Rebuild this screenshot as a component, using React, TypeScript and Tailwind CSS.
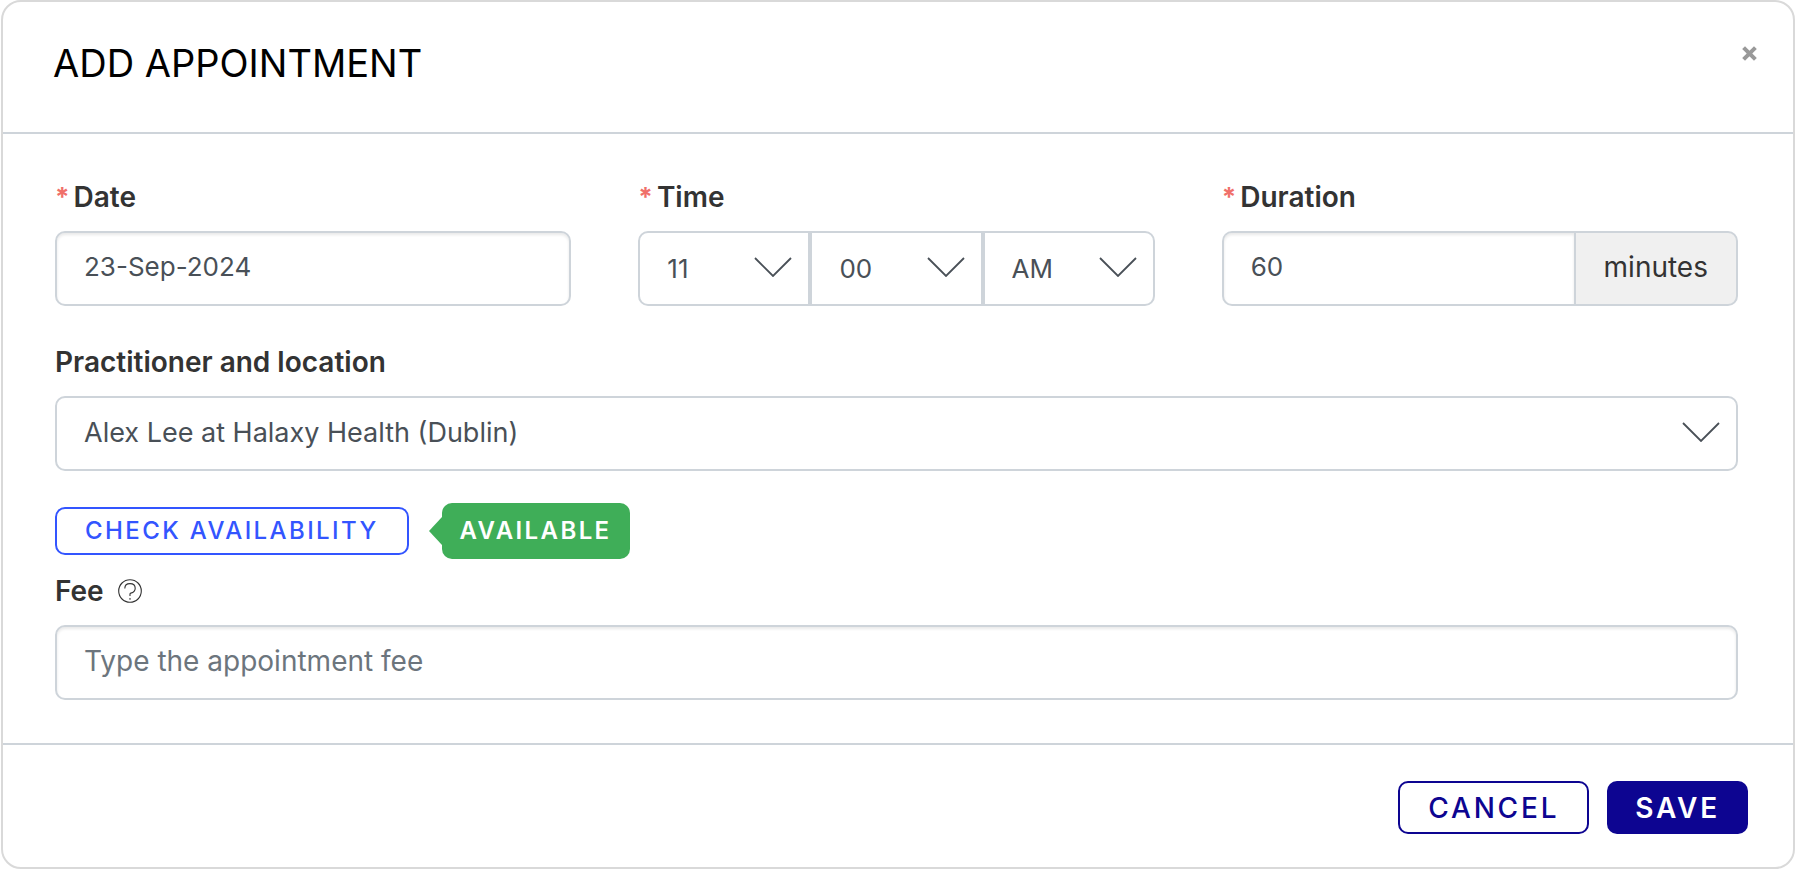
// src/components/appointments/AddAppointmentDialog.tsx
// Appointment form: date, time, duration, practitioner and fee.

import { useState } from 'react';
import type { ReactNode, SelectHTMLAttributes } from 'react';
import clsx from 'clsx';

const inputCls =
  'h-[75px] w-full min-w-0 border-2 border-[#ced4da] bg-white px-[27px] pb-1 text-[#495057] ' +
  'shadow-[inset_0_2px_3px_rgba(0,0,0,0.09)] outline-none placeholder:text-[#6c757d] placeholder:opacity-100';

function FieldLabel({ htmlFor, required, children }: { htmlFor: string; required?: boolean; children: ReactNode }) {
  return (
    <label htmlFor={htmlFor} className="flex gap-1 text-[28px] leading-10 font-semibold text-[#333333]">
      {required && <span className="text-[26px] font-bold text-[#f0706a]">*</span>}
      {children}
    </label>
  );
}

function Chevron() {
  return (
    <svg
      className="pointer-events-none absolute top-1/2 right-[18px] -mt-3 h-5 w-[38px]"
      viewBox="0 0 38 20"
      fill="none"
      stroke="#495057"
      strokeWidth="1.8"
      aria-hidden="true"
    >
      <path d="M1 1 19 19 37 1" />
    </svg>
  );
}

interface SelectProps extends SelectHTMLAttributes<HTMLSelectElement> {
  options: string[];
}

function Select({ options, className, ...rest }: SelectProps) {
  return (
    <div className="relative">
      <select
        {...rest}
        className={clsx(
          'h-[75px] w-full appearance-none border-2 border-[#ced4da] bg-white pr-16 pl-[27px] text-[#495057] outline-none',
          className
        )}
      >
        {options.map(o => <option key={o}>{o}</option>)}
      </select>
      <Chevron />
    </div>
  );
}

function HelpIcon() {
  return (
    <svg className="h-6 w-6" viewBox="0 0 24 24" fill="none" stroke="#333333" strokeWidth="1.1" aria-hidden="true">
      <circle cx="12" cy="12" r="11.3" />
      <path d="M6.8 9.4C6.8 6.4 9 4.6 12 4.6s5.2 1.9 5.2 4.7c0 2.9-2.2 4.4-4.4 4.8-.6.1-.8.4-.8.9v2" />
      <path d="M12 19v1.7" />
    </svg>
  );
}

export default function App() {
  const [date, setDate] = useState('23-Sep-2024');
  const [duration, setDuration] = useState('60');
  const [fee, setFee] = useState('');

  return (
    <main
      role="dialog"
      aria-labelledby="dialog-title"
      className="ml-px rounded-[20px] border-2 border-[#d9d9d9] bg-white font-['Inter',sans-serif]"
    >
      {/* Header */}
      <header className="flex items-start justify-between border-b-2 border-[#ced4da] pt-[37px] pr-9 pb-[45px] pl-[50px]">
        <h1 id="dialog-title" className="text-[38px] leading-12 font-normal text-black uppercase">Add appointment</h1>
        <button type="button" aria-label="Close" className="mt-[7px]">
          <svg className="h-[15px] w-[15px]" viewBox="0 0 15 15" stroke="#999999" strokeWidth="4" aria-hidden="true">
            <path d="M1.6 1.6 13.4 13.4M13.4 1.6 1.6 13.4" />
          </svg>
        </button>
      </header>

      <form onSubmit={e => e.preventDefault()}>
        {/* Fields */}
        <div className="pt-[43px] pr-[55px] pb-[43px] pl-[52px]">
          <div className="grid grid-cols-3 gap-x-[67px]">
            <div className="space-y-3.5">
              <FieldLabel htmlFor="date" required>Date</FieldLabel>
              <input
                id="date"
                value={date}
                onChange={e => setDate(e.target.value)}
                className={clsx(inputCls, 'rounded-[10px] text-[26px]')}
              />
            </div>

            <div className="space-y-3.5">
              <FieldLabel htmlFor="hour" required>Time</FieldLabel>
              <div className="grid grid-cols-3">
                <Select id="hour" options={['11', '12', '01', '02']} className="rounded-l-[10px] text-[26px]" />
                <Select aria-label="Minutes" options={['00', '15', '30', '45']} className="text-[26px]" />
                <Select aria-label="AM or PM" options={['AM', 'PM']} className="rounded-r-[10px] text-[26px]" />
              </div>
            </div>

            <div className="space-y-3.5">
              <FieldLabel htmlFor="duration" required>Duration</FieldLabel>
              <div className="flex">
                <input
                  id="duration"
                  value={duration}
                  onChange={e => setDuration(e.target.value)}
                  className={clsx(inputCls, 'rounded-l-[10px] border-r-0 text-[26px]')}
                />
                <span className="flex items-center rounded-r-[10px] border-2 border-[#ced4da] bg-[#f0f0f0] px-7 pb-1 text-[28px] text-[#333333]">
                  minutes
                </span>
              </div>
            </div>
          </div>

          <div className="mt-9 space-y-3.5">
            <FieldLabel htmlFor="practitioner">Practitioner and location</FieldLabel>
            <Select
              id="practitioner"
              options={['Alex Lee at Halaxy Health (Dublin)']}
              className="rounded-[10px] text-[27px]"
            />
          </div>

          <div className="mt-8 flex items-center gap-5">
            <button
              type="button"
              className="h-12 rounded-[10px] border-2 border-[#3355ff] px-7 text-2xl leading-8 font-medium tracking-widest text-[#3355ff] uppercase"
            >
              Check availability
            </button>
            <div role="status" className="flex items-center">
              <svg className="h-7 w-[13px]" viewBox="0 0 13 28" fill="#3fae58" aria-hidden="true">
                <path d="M0 14 13 0V28Z" />
              </svg>
              <span className="rounded-[10px] bg-[#3fae58] px-[18px] py-3 text-2xl leading-8 font-semibold tracking-widest text-white uppercase">
                Available
              </span>
            </div>
          </div>

          <div className="mt-3 space-y-3.5">
            <div className="flex items-center gap-3.5">
              <FieldLabel htmlFor="fee">Fee</FieldLabel>
              <button type="button" aria-label="About the fee">
                <HelpIcon />
              </button>
            </div>
            <input
              id="fee"
              value={fee}
              onChange={e => setFee(e.target.value)}
              placeholder="Type the appointment fee"
              className={clsx(inputCls, 'rounded-[10px] text-[28px]')}
            />
          </div>
        </div>

        {/* Actions */}
        <footer className="flex justify-end gap-[18px] border-t-2 border-[#ced4da] pt-9 pr-[45px] pb-[33px]">
          <button
            type="button"
            className="h-[53px] rounded-[10px] border-2 border-[#0d0591] px-7 text-[28px] font-medium tracking-widest text-[#0d0591] uppercase"
          >
            Cancel
          </button>
          <button
            type="submit"
            className="h-[53px] rounded-[10px] bg-[#0d0591] px-7 text-[28px] font-semibold tracking-widest text-white uppercase"
          >
            Save
          </button>
        </footer>
      </form>
    </main>
  );
}
